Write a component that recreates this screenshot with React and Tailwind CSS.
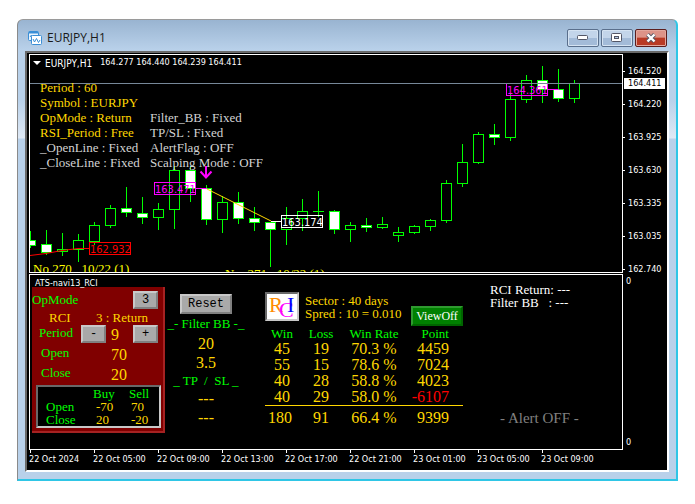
import clsx from 'clsx';

// [high, body top, body bottom, low, filled]
const candles = [
  [231, 240, 245, 248, 1],
  [230, 244, 252, 255, 1],
  [233, 249, 251, 256, 0],
  [234, 240, 249, 262, 0],
  [222, 225, 241, 245, 0],
  [205, 208, 225, 228, 0],
  [187, 208, 212, 217, 1],
  [197, 213, 217, 224, 1],
  [203, 209, 217, 230, 0],
  [166, 170, 209, 229, 0],
  [166, 170, 188, 202, 1],
  [185, 188, 219, 225, 1],
  [196, 202, 219, 233, 0],
  [192, 202, 218, 224, 1],
  [207, 218, 222, 231, 1],
  [222, 222, 229, 267, 1],
  [207, 218, 229, 245, 0],
  [199, 211, 218, 231, 0],
  [191, 211, 211, 217, 0],
  [210, 211, 229, 234, 1],
  [222, 225, 229, 242, 0],
  [218, 225, 227, 232, 1],
  [217, 224, 227, 229, 0],
  [227, 232, 235, 242, 0],
  [225, 226, 232, 234, 0],
  [219, 220, 226, 231, 0],
  [180, 183, 220, 223, 0],
  [144, 162, 183, 187, 0],
  [132, 134, 162, 164, 0],
  [124, 134, 137, 145, 1],
  [94, 99, 137, 141, 0],
  [75, 80, 99, 103, 0],
  [66, 80, 89, 103, 1],
  [69, 89, 98, 102, 1],
  [80, 83, 98, 103, 0],
];

const prices = ['164.520', '164.220', '163.925', '163.630', '163.335', '163.035', '162.740'];

const times = [
  '22 Oct 2024',
  '22 Oct 05:00',
  '22 Oct 09:00',
  '22 Oct 13:00',
  '22 Oct 17:00',
  '22 Oct 21:00',
  '23 Oct 01:00',
  '23 Oct 05:00',
  '23 Oct 09:00',
];

const settings = [
  ['Period : 60', '', true],
  ['Symbol : EURJPY', '', true],
  ['OpMode : Return', 'Filter_BB : Fixed', true],
  ['RSI_Period : Free', 'TP/SL : Fixed', true],
  ['_OpenLine : Fixed', 'AlertFlag : OFF', false],
  ['_CloseLine : Fixed', 'Scalping Mode : OFF', false],
];

const stats = [
  ['45', '19', '70.3 %', '4459'],
  ['55', '15', '78.6 %', '7024'],
  ['40', '28', '58.8 %', '4023'],
  ['40', '29', '58.0 %', '-6107'],
];

function Candle({ x, data }) {
  const [high, top, bottom, low, filled] = data;
  return (
    <g stroke="#00ff00" strokeWidth="1" shapeRendering="crispEdges">
      <path d={`M${x} ${high}V${top + 0.5}M${x} ${bottom + 0.5}V${low}`} />
      {top === bottom ? (
        <path d={`M${x - 5.5} ${top + 0.5}h11`} />
      ) : (
        <rect x={x - 5} y={top + 0.5} width="10" height={bottom - top} fill={filled ? '#fff' : 'none'} />
      )}
    </g>
  );
}

function PriceTag({ x, y, color, children }) {
  return (
    <g>
      <rect x={x + 0.5} y={y + 0.5} width="41" height="12" fill="none" stroke={color} shapeRendering="crispEdges" />
      <text x={x + 1} y={y + 11} fill={color} className="text-[11px]">
        {children}
      </text>
    </g>
  );
}

function PriceChart() {
  return (
    <div className="relative h-[219px] border border-white overflow-hidden">
      <svg
        className="absolute left-0 top-0 font-['DejaVu_Sans_Condensed','DejaVu_Sans',sans-serif]"
        width="592"
        height="217"
        viewBox="0 55 592 217"
        aria-hidden="true"
      >
        {candles.map((data, i) => (
          <Candle key={i} x={i * 16 + 0.5} data={data} />
        ))}
        <path d="M0 255.5L16 253.5 32 250.5 48 248.5H60" fill="none" stroke="#ff0000" />
        <PriceTag x={59} y={242} color="#ff0000">162.932</PriceTag>
        <path d="M166 188.5H177" stroke="#ff00ff" />
        <PriceTag x={124} y={182} color="#ff00ff">163.471</PriceTag>
        <path d="M177 189L241 221" stroke="#ffd700" />
        <path d="M241 221.5H252" stroke="#ffffff" />
        <PriceTag x={251} y={215} color="#ffffff">163.174</PriceTag>
        <path d="M517 89.5H529" stroke="#ff00ff" />
        <PriceTag x={476} y={83} color="#ff00ff">164.361</PriceTag>
        <path d="M176 166V177M170.500 171.500L176 177.500 181.500 171.500" fill="none" stroke="#ff00ff" strokeWidth="2" />
      </svg>
      <div className="absolute inset-x-0 top-7 h-px bg-[#778899]" />
      <div className="relative flex items-center h-4 pl-[3px] font-['DejaVu_Sans_Condensed','DejaVu_Sans',sans-serif] text-[9px] text-white">
        <svg width="8" height="4" viewBox="0 0 8 4" aria-hidden="true">
          <path d="M0 0h8L4 4z" fill="#fff" />
        </svg>
        <span className="pl-1 pr-2 text-[10px]">EURJPY,H1</span>
        <span>164.277 164.440 164.239 164.411</span>
      </div>
      <dl className="relative pt-[9px] pl-[10px] text-[13px] leading-[15px]">
        {settings.map(([left, right, gold]) => (
          <div key={left} className="flex">
            <dt className={clsx('w-[110px]', gold ? 'text-[#ffd700]' : 'text-[#d3d3d3]')}>{left}</dt>
            <dd className="text-[#d3d3d3]">{right}</dd>
          </div>
        ))}
      </dl>
      <div className="absolute left-[3px] top-[206px] text-[13px] leading-[15px] text-[#ffff00] whitespace-pre">
        No 270   10/22 (1)
      </div>
      <div className="absolute left-[195px] top-[211px] text-[13px] leading-[15px] text-[#ffff00] whitespace-pre">
        No_271 _10/22 (1)
      </div>
    </div>
  );
}

function GrayButton({ className, children, ...props }) {
  return (
    <button
      className={clsx(
        "flex items-center justify-center bg-[#a9a9a9] border-2 border-t-[#c8c8c8] border-l-[#c8c8c8] border-r-[#808080] border-b-[#808080] font-['Liberation_Mono',monospace] text-[12px] leading-none text-black",
        className
      )}
      {...props}
    >
      {children}
    </button>
  );
}

function OperationPanel() {
  return (
    <section className="w-[133px] pb-[3px] bg-[#800000] border-r-2 border-b-2 border-[#a52222] text-[13px] leading-[13px] text-[#ffd700]">
      <div className="grid grid-cols-[101px_25px] items-center h-6 pt-px">
        <span className="text-[#00ff00]">OpMode</span>
        <GrayButton className="h-[18px]" aria-label="Change mode">3</GrayButton>
      </div>
      <div className="grid grid-cols-[47px_1fr] items-center h-[13px] pl-[17px]">
        <span>RCI</span>
        <span>3 : Return</span>
      </div>
      <div className="grid grid-cols-[49px_25px_27px_25px] items-center h-5">
        <span className="pl-[7px] pb-[3px] text-[#00ff00]">Period</span>
        <GrayButton className="h-[18px]" aria-label="Decrease period">-</GrayButton>
        <span className="pl-[5px] text-[16px]">9</span>
        <GrayButton className="h-[18px]" aria-label="Increase period">+</GrayButton>
      </div>
      <div className="grid grid-cols-[79px_1fr] items-center h-5">
        <span className="pl-[9px] pb-[3px] text-[#00ff00]">Open</span>
        <span className="text-[16px]">70</span>
      </div>
      <div className="grid grid-cols-[79px_1fr] items-center h-5">
        <span className="pl-[9px] pb-[3px] text-[#00ff00]">Close</span>
        <span className="text-[16px]">20</span>
      </div>
      <div className="mt-px ml-1 mr-[2px] bg-black border-2 border-t-[#696969] border-l-[#696969] border-r-[#c8c8c8] border-b-[#c8c8c8]">
        <table className="w-full table-fixed text-left">
          <thead className="text-[#00ff00]">
            <tr>
              <td className="w-[55px]" />
              <th className="w-9 font-normal">Buy</th>
              <th className="font-normal">Sell</th>
            </tr>
          </thead>
          <tbody>
            <tr>
              <th className="pl-2 font-normal text-[#00ff00]">Open</th>
              <td className="pl-[3px]">-70</td>
              <td className="pl-[2px]">70</td>
            </tr>
            <tr>
              <th className="pl-2 font-normal text-[#00ff00]">Close</th>
              <td className="pl-[3px]">20</td>
              <td className="pl-[2px]">-20</td>
            </tr>
          </tbody>
        </table>
      </div>
    </section>
  );
}

function FilterPanel() {
  return (
    <section className="flex flex-col items-center w-[78px] ml-[2px] pt-[19px] text-[16px] leading-[19px] text-[#ffd700] whitespace-pre">
      <GrayButton className="w-[52px] h-5">Reset</GrayButton>
      <h3 className="text-[13px] leading-5 text-[#00ff00]">_- Filter BB -_</h3>
      <p>20</p>
      <p>3.5</p>
      <h3 className="text-[13px] leading-[17px] text-[#00ff00]">_ TP  /  SL _</h3>
      <p>---</p>
      <p>---</p>
    </section>
  );
}

function StatsPanel() {
  return (
    <section className="w-[198px] ml-5 pt-[17px] text-[#ffd700]">
      <div className="flex h-[34px] text-[13px] leading-[13px]">
        <svg width="34" height="29" viewBox="0 0 34 29" aria-label="RCI">
          <rect width="34" height="29" fill="#c8c8c8" />
          <path d="M0 29V0H34L32 2H2V27z" fill="#696969" />
          <rect x="2" y="2" width="30" height="25" fill="#fff" />
          <text x="4" y="20" fontSize="21" fill="#ff8c00">R</text>
          <text x="14" y="25" fontSize="22" fill="#ff00ff">C</text>
          <text x="22" y="20" fontSize="22" fill="#0000ff">I</text>
        </svg>
        <div className="pt-[2px] pl-[6px] whitespace-nowrap">
          <p>Sector : 40 days</p>
          <p>Spred : 10 = 0.010</p>
        </div>
        <button className="flex items-center justify-center w-[52px] h-5 ml-auto self-end bg-[#008000] border-2 border-t-[#2f9a2f] border-l-[#2f9a2f] border-r-[#006400] border-b-[#006400] text-[12px] leading-none text-white">
          ViewOff
        </button>
      </div>
      <table className="w-full table-fixed text-center text-[16px] leading-4">
        <thead className="text-[13px] leading-[15px] text-[#00ff00] whitespace-nowrap">
          <tr>
            <th className="w-[34px] font-normal">Win</th>
            <th className="w-11 font-normal">Loss</th>
            <th className="w-[62px] font-normal">Win Rate</th>
            <th className="pr-[14px] text-right font-normal">Point</th>
          </tr>
        </thead>
        <tbody>
          {stats.map(([win, loss, rate, point]) => (
            <tr key={rate}>
              <td>{win}</td>
              <td>{loss}</td>
              <td>{rate}</td>
              <td className={clsx('pr-[14px] text-right', point.startsWith('-') && 'text-[#ff0000]')}>{point}</td>
            </tr>
          ))}
        </tbody>
        <tfoot className="border-t border-[#ffd700] leading-6">
          <tr>
            <td className="pr-1">180</td>
            <td>91</td>
            <td>66.4 %</td>
            <td className="pr-[14px] text-right">9399</td>
          </tr>
        </tfoot>
      </table>
    </section>
  );
}

function IndicatorWindow() {
  return (
    <div className="flex h-[176px] mt-px border border-white">
      <div className="pl-[2px]">
        <h2 className="h-3 pl-[3px] pt-[3px] font-['DejaVu_Sans_Condensed','DejaVu_Sans',sans-serif] text-[9px] leading-[10px] text-white">
          ATS-navi13_RCI
        </h2>
        <OperationPanel />
      </div>
      <FilterPanel />
      <StatsPanel />
      <div className="flex flex-col flex-1 pl-[27px] pt-2 text-[13px] leading-[13px] text-white whitespace-pre">
        <p>RCI Return: ---</p>
        <p>Filter BB   : ---</p>
        <p className="mt-auto mb-[21px] pl-[10px] text-[15px] leading-5 text-[#808080]">- Alert OFF -</p>
      </div>
    </div>
  );
}

function PriceAxis() {
  return (
    <div className="relative flex flex-col w-11 pt-[11px] font-['DejaVu_Sans_Condensed','DejaVu_Sans',sans-serif] text-[9px] leading-3 text-white">
      {prices.map((price) => (
        <div key={price} className="flex items-start h-[33px] nth-[7]:h-3">
          <span className="w-[2px] h-px mt-[6px] mr-[3px] bg-white" />
          {price}
        </div>
      ))}
      <p className="pl-[3px]">0</p>
      <p className="mt-auto pl-[3px] pb-[2px]">0</p>
      <div className="absolute left-px top-6 w-[41px] h-[11px] pl-1 bg-white leading-[11px] text-black">164.411</div>
    </div>
  );
}

function TimeAxis() {
  return (
    <div className="flex h-5 overflow-hidden font-['DejaVu_Sans_Condensed','DejaVu_Sans',sans-serif] text-[9px] leading-3 text-white whitespace-nowrap">
      {times.map((time) => (
        <div key={time} className="w-16 shrink-0">
          <span className="block w-px h-[3px] ml-px bg-white" />
          {time}
        </div>
      ))}
    </div>
  );
}

function TitleBar() {
  return (
    <header className="flex items-center h-[31px] pl-[10px] pr-[9px]">
      <svg className="mt-1" width="14" height="14" viewBox="0 0 14 14" aria-hidden="true">
        <rect x="0.500" y="0.500" width="10" height="9" rx="1" fill="#eaf5ff" stroke="#3b8fd6" />
        <path d="M1 1.500h9" stroke="#3b8fd6" strokeWidth="2" />
        <path d="M2 6l1.500-2L5 7" fill="none" stroke="#3b8fd6" />
        <rect x="3.500" y="4.500" width="10" height="9" rx="1" fill="#fff" stroke="#3b8fd6" />
        <path d="M5 8l1.500 3L8.500 7.500 10.500 11.500 12 9" fill="none" stroke="#3b8fd6" />
      </svg>
      <h1 className="pl-[5px] pt-1 font-['Open_Sans','Noto_Sans',sans-serif] text-[12px] leading-4 text-[#1a1a1a]">EURJPY,H1</h1>
      <div className="flex gap-[2px] ml-auto pt-1">
        <button
          aria-label="Minimize"
          className="flex items-center justify-center w-8 h-[18px] rounded-[2px] border border-[#5a6f8c] bg-linear-to-b from-[#c3d5ea] from-50% to-[#a3bbd8] to-50% shadow-[inset_0_0_0_1px_#d5e3f2]"
        >
          <svg width="12" height="6" viewBox="0 0 12 6">
            <rect x="0.500" y="0.500" width="10" height="4" rx="1" fill="#fff" stroke="#535666" />
          </svg>
        </button>
        <button
          aria-label="Maximize"
          className="flex items-center justify-center w-8 h-[18px] rounded-[2px] border border-[#5a6f8c] bg-linear-to-b from-[#c3d5ea] from-50% to-[#a3bbd8] to-50% shadow-[inset_0_0_0_1px_#d5e3f2]"
        >
          <svg width="12" height="10" viewBox="0 0 12 10">
            <rect x="0.500" y="0.500" width="10" height="8" rx="1" fill="#fff" stroke="#535666" />
            <rect x="3.500" y="3.500" width="4" height="2" fill="#b5cae3" stroke="#535666" />
          </svg>
        </button>
        <button
          aria-label="Close"
          className="flex items-center justify-center w-8 h-[18px] rounded-[2px] border border-[#5b1d1d] bg-linear-to-b from-[#dd9388] from-45% to-[#b93a25] to-50% shadow-[inset_0_0_0_1px_#e3a79d]"
        >
          <svg width="12" height="10" viewBox="0 0 12 10">
            <path d="M2.500 1.500l7 7M9.500 1.500l-7 7" stroke="#535666" strokeWidth="4" />
            <path d="M2.500 1.500l7 7M9.500 1.500l-7 7" stroke="#fff" strokeWidth="2.400" />
          </svg>
        </button>
      </div>
    </header>
  );
}

export default function App() {
  return (
    <main className="min-h-screen bg-white pt-[19px] pl-[17px] pr-[17px] pb-6 font-['Liberation_Serif',serif]">
      <div className="rounded-t-[6px] border-t border-l border-t-[#9a9a9a] border-l-[#8a8a8a] border-r-2 border-b-2 border-r-[#2fc6e6] border-b-[#2fc6e6] bg-[#b9d1ea] bg-[linear-gradient(#99b4d1_0px,#b9d1ea_30px,#b9d1ea_80px,#dfe9f5_118px,#b9d1ea_119px)] px-[7px] pb-[7px]">
        <div className="-mx-[7px]">
          <TitleBar />
        </div>
        <div className="border-t-2 border-l-2 border-t-[#696969] border-l-[#696969] border-r-2 border-b-2 border-r-white border-b-white bg-black pl-[2px] pt-px">
          <div className="flex">
            <div className="flex-1 min-w-0">
              <PriceChart />
              <IndicatorWindow />
            </div>
            <PriceAxis />
          </div>
          <TimeAxis />
        </div>
      </div>
    </main>
  );
}
